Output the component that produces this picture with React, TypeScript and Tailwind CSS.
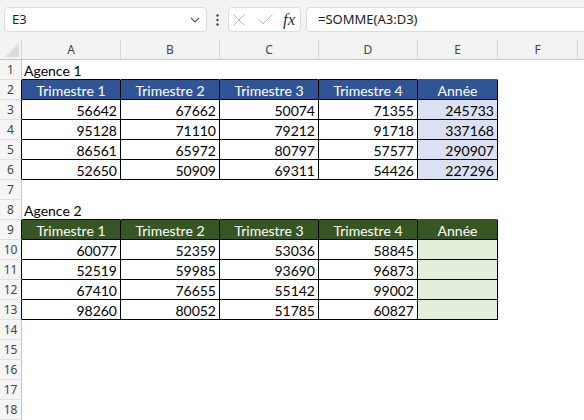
import React from 'react';

type Cell = {
  text?: string;
  align?: 'left' | 'right' | 'center';
  cls?: string;
};

const colW = ['w-[99px]', 'w-[99px]', 'w-[99px]', 'w-[99px]', 'w-[80px]', 'w-[80px]'];

const cellFont = { fontFamily: 'Lato, "Liberation Sans", sans-serif' };
const uiFont = { fontFamily: '"Noto Sans", "Open Sans", sans-serif' };

const blueHead = 'bg-[#2f5597] text-white border-r-black border-b-black';
const greenHead = 'bg-[#375623] text-white border-r-black border-b-black';
const plain = 'bg-white text-black border-r-black border-b-black';
const blueSum = 'bg-[#d9e1f2] text-black border-r-black border-b-black';
const greenSum = 'bg-[#e2efda] text-black border-r-black border-b-black';

const agence1 = [
  [56642, 67662, 50074, 71355, 245733],
  [95128, 71110, 79212, 91718, 337168],
  [86561, 65972, 80797, 57577, 290907],
  [52650, 50909, 69311, 54426, 227296],
];

const agence2 = [
  [60077, 52359, 53036, 58845],
  [52519, 59985, 93690, 96873],
  [67410, 76655, 55142, 99002],
  [98260, 80052, 51785, 60827],
];

const heads = ['Trimestre 1', 'Trimestre 2', 'Trimestre 3', 'Trimestre 4', 'Année'];

type Row = { cells: Cell[]; inTable?: boolean };

const titleRow = (title: string, edge: string): Row => ({
  cells: [
    { text: title, align: 'left', cls: 'border-b-black' },
    { cls: 'border-b-black' },
    { cls: 'border-b-black' },
    { cls: 'border-b-black' },
    { cls: edge },
  ],
});

const headRow = (cls: string): Row => ({
  inTable: true,
  cells: heads.map((h) => ({ text: h, align: 'center', cls })),
});

const rows: Row[] = [
  titleRow('Agence 1', 'border-b-[#2f5597]'),
  headRow(blueHead),
  ...agence1.map((r) => ({
    inTable: true,
    cells: r.map((v, i) => ({ text: String(v), align: 'right' as const, cls: i === 4 ? blueSum : plain })),
  })),
  { cells: [] },
  titleRow('Agence 2', 'border-b-[#375623]'),
  headRow(greenHead),
  ...agence2.map((r) => ({
    inTable: true,
    cells: [
      ...r.map((v) => ({ text: String(v), align: 'right' as const, cls: plain })),
      { cls: greenSum },
    ],
  })),
  { cells: [] },
  { cells: [] },
  { cells: [] },
  { cells: [] },
  { cells: [] },
];

function FormulaBar() {
  return (
    <div className="h-[40px] bg-[#f3f3f3] flex items-start pt-[7px] pl-[4px]" style={uiFont}>
      <div className="w-[203px] h-[25px] bg-white border border-[#dcdcdc] rounded-[4px] flex items-center justify-between pl-[7px] pr-[6px] text-[13px] text-[#222]">
        <span>E3</span>
        <svg width="10" height="6" viewBox="0 0 10 6" fill="none">
          <path d="M1 1l4 4 4-4" stroke="#555" strokeWidth="1.1" />
        </svg>
      </div>
      <div className="w-[21px] h-[25px] flex items-center justify-center">
        <svg width="3" height="12" viewBox="0 0 3 12">
          <circle cx="1.5" cy="1.5" r="1.2" fill="#444" />
          <circle cx="1.5" cy="6" r="1.2" fill="#444" />
          <circle cx="1.5" cy="10.5" r="1.2" fill="#444" />
        </svg>
      </div>
      <div className="w-[73px] h-[25px] bg-white border border-[#dcdcdc] rounded-[4px] flex items-center pl-[4px]">
        <svg width="12" height="12" viewBox="0 0 12 12" fill="none">
          <path d="M0.5 0.5l11 11M11.5 0.5l-11 11" stroke="#b8b8b8" strokeWidth="1" />
        </svg>
        <svg className="ml-[13px]" width="15" height="11" viewBox="0 0 15 11" fill="none">
          <path d="M0.5 5.5l4.5 4.5L14.5 0.5" stroke="#b8b8b8" strokeWidth="1" />
        </svg>
        <span
          className="ml-[10px] italic text-[17px] text-[#333] leading-none"
          style={{ fontFamily: '"Liberation Serif", serif' }}
        >
          fx
        </span>
      </div>
      <div className="ml-[5px] flex-1 mr-[-10px] h-[25px] bg-white border border-[#dcdcdc] rounded-[4px] flex items-center pl-[11px] text-[13px] text-[#222]">
        =SOMME(A3:D3)
      </div>
    </div>
  );
}

function ColumnHeader() {
  const letters = ['A', 'B', 'C', 'D', 'E', 'F'];
  return (
    <div className="h-[20px] flex bg-[#f3f3f3] border-b border-[#c6c6c6] text-[12px] text-[#444]" style={uiFont}>
      <div className="w-[22px] shrink-0 border-r border-[#d6d6d6] flex items-end justify-end pr-[2px] pb-[2px]">
        <svg width="14" height="14" viewBox="0 0 14 14">
          <path d="M14 0V14H0Z" fill="#dcdcdc" />
        </svg>
      </div>
      {letters.map((l, i) => (
        <div key={l} className={`${colW[i]} shrink-0 border-r border-[#d6d6d6] flex items-center justify-center`}>
          {l}
        </div>
      ))}
      <div className="flex-1" />
    </div>
  );
}

function SheetRow({ n, row }: { n: number; row: Row }) {
  return (
    <div className="h-[20px] flex">
      <div
        className={`w-[22px] shrink-0 bg-[#f5f5f5] border-b border-b-[#e1e1e1] border-r ${
          row.inTable ? 'border-r-black' : 'border-r-[#c6c6c6]'
        } flex items-center justify-center text-[12px] text-[#444]`}
        style={uiFont}
      >
        {n}
      </div>
      {colW.map((w, i) => {
        const c = row.cells[i];
        const align =
          c?.align === 'right' ? 'justify-end pr-[3px]' : c?.align === 'center' ? 'justify-center' : 'justify-start pl-[2px]';
        return (
          <div
            key={i}
            className={`${w} shrink-0 border-r border-b border-transparent ${c?.cls ?? ''} flex items-end ${align} text-[14px] leading-[17px] whitespace-nowrap overflow-visible`}
            style={cellFont}
          >
            {c?.text}
          </div>
        );
      })}
      <div className="flex-1" />
    </div>
  );
}

export default function App() {
  return (
    <div className="w-[584px] h-[420px] overflow-hidden bg-white">
      <FormulaBar />
      <ColumnHeader />
      {rows.map((r, i) => (
        <SheetRow key={i} n={i + 1} row={r} />
      ))}
    </div>
  );
}
